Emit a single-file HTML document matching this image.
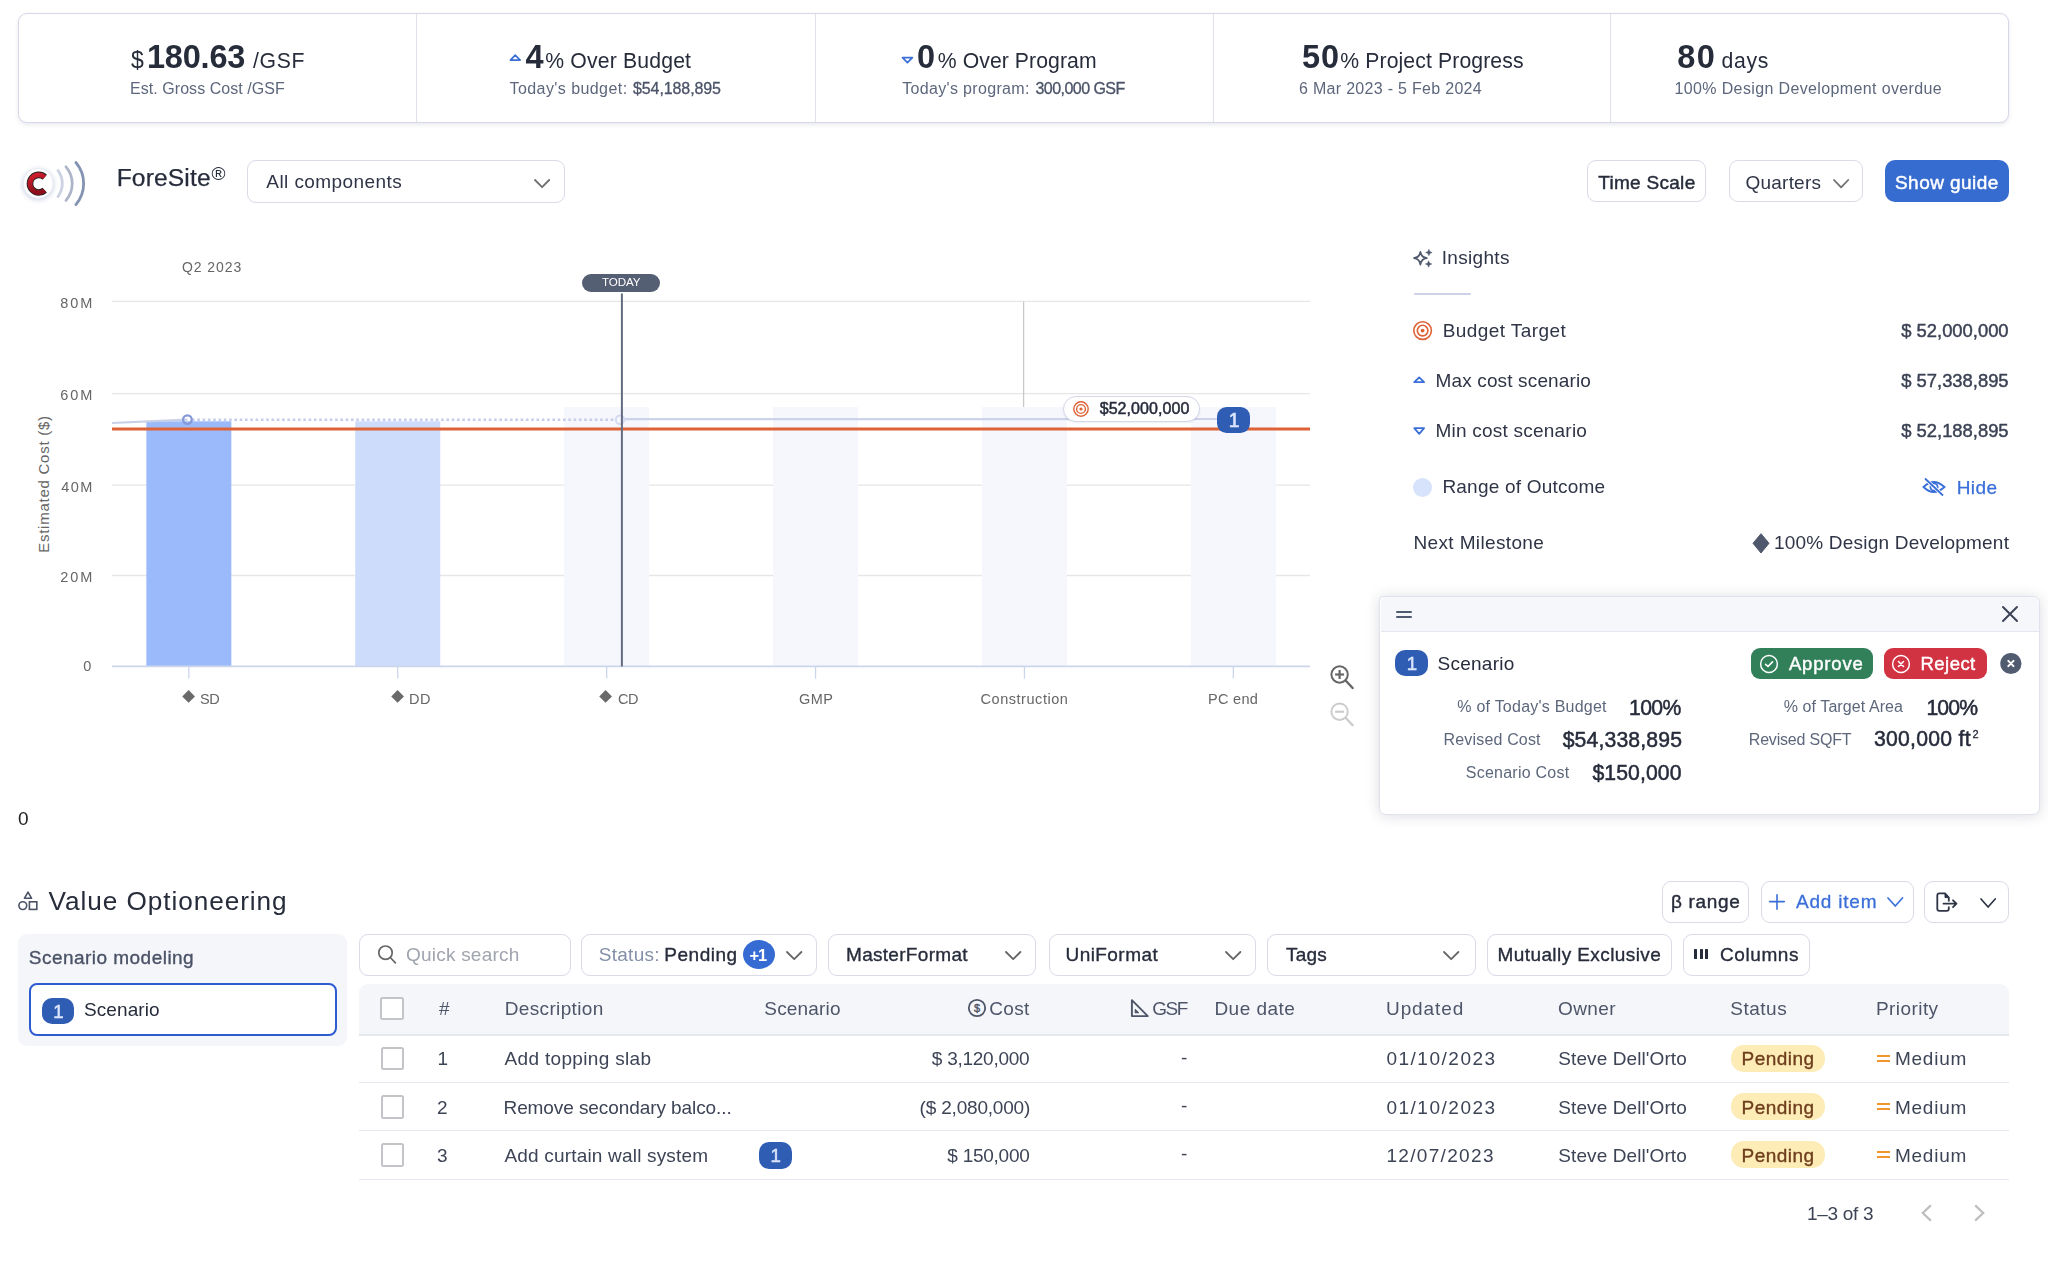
<!DOCTYPE html><html><head><meta charset="utf-8"><style>html,body{margin:0;padding:0;background:#fff;width:2048px;height:1270px;overflow:hidden;}body{position:relative;font-family:"Liberation Sans",sans-serif;}</style></head><body><div style="position:absolute;left:18px;top:13px;width:1991px;height:110px;box-sizing:border-box;border:1.5px solid #d6d8e8;border-radius:9px;background:#fff;box-shadow:0 2px 4px rgba(40,50,90,0.10);"></div>
<div style="position:absolute;left:415.7px;top:14px;width:1.3000000000000114px;height:108px;background:#dfe1ec;"></div>
<div style="position:absolute;left:814.7px;top:14px;width:1.2999999999999545px;height:108px;background:#dfe1ec;"></div>
<div style="position:absolute;left:1212.7px;top:14px;width:1.2999999999999545px;height:108px;background:#dfe1ec;"></div>
<div style="position:absolute;left:1610.2px;top:14px;width:1.2999999999999545px;height:108px;background:#dfe1ec;"></div>
<svg style="position:absolute;left:508px;top:52px" width="16" height="12" viewBox="0 0 16 12"><path d="M2.4 8.1 L7.25 3.2 L12.1 8.1 Z" fill="none" stroke="#3a6fd8" stroke-width="1.7" stroke-linejoin="round"/></svg>
<svg style="position:absolute;left:900px;top:54px" width="16" height="12" viewBox="0 0 16 12"><path d="M2.5 3.7 L7.45 8.7 L12.4 3.7 Z" fill="none" stroke="#3a6fd8" stroke-width="1.7" stroke-linejoin="round"/></svg>
<svg style="position:absolute;left:18px;top:156px" width="72" height="56" viewBox="0 0 72 56">
<defs><filter id="sh" x="-50%" y="-50%" width="200%" height="200%"><feGaussianBlur stdDeviation="2"/></filter>
<linearGradient id="rg" x1="0" y1="0" x2="0.3" y2="1"><stop offset="0" stop-color="#d42030"/><stop offset="1" stop-color="#8c0e1a"/></linearGradient></defs>
<circle cx="20.2" cy="28.4" r="16" fill="#cfd5e6" filter="url(#sh)" opacity="0.9"/>
<circle cx="20.2" cy="27.4" r="15" fill="#fff" stroke="#e4e9f3" stroke-width="0.8"/>
<path d="M26.7 21.2 A8.8 8.8 0 1 0 26.7 34.2" fill="none" stroke="#222" stroke-width="6.6"/>
<path d="M26.7 21.2 A8.8 8.8 0 1 0 26.7 34.2" fill="none" stroke="url(#rg)" stroke-width="4.8"/>
<path d="M40 14.6 A21.8 21.8 0 0 1 40 40.6" fill="none" stroke="#cdd2e2" stroke-width="2.8" stroke-linecap="round"/>
<path d="M48 10.8 A25.8 25.8 0 0 1 48 44.4" fill="none" stroke="#aeb5c8" stroke-width="2.8" stroke-linecap="round"/>
<path d="M57.9 6.5 A32.5 32.5 0 0 1 57.9 48.6" fill="none" stroke="#8593b3" stroke-width="2.8" stroke-linecap="round"/>
</svg>
<div style="position:absolute;left:247px;top:160px;width:318px;height:43px;box-sizing:border-box;border:1.3px solid #d9dbe7;border-radius:9px;background:#fff;"></div>
<svg style="position:absolute;left:532.8px;top:177.6px" width="18.2" height="11.2" viewBox="0 0 18.2 11.2"><path d="M2 2 L9.1 9.2 L16.2 2" fill="none" stroke="#6f6f6f" stroke-width="1.8" stroke-linecap="round" stroke-linejoin="round"/></svg>
<div style="position:absolute;left:1586.7px;top:160.3px;width:119.09999999999991px;height:42.099999999999994px;box-sizing:border-box;border:1.3px solid #d9dbe7;border-radius:9px;background:#fff;"></div>
<div style="position:absolute;left:1728.5px;top:160.3px;width:134.5px;height:42.099999999999994px;box-sizing:border-box;border:1.3px solid #d9dbe7;border-radius:9px;background:#fff;"></div>
<svg style="position:absolute;left:1831.5px;top:177.8px" width="18.2" height="11.4" viewBox="0 0 18.2 11.4"><path d="M2 2 L9.1 9.4 L16.2 2" fill="none" stroke="#6f6f6f" stroke-width="1.8" stroke-linecap="round" stroke-linejoin="round"/></svg>
<div style="position:absolute;left:1885.2px;top:160.3px;width:123.39999999999986px;height:42.099999999999994px;border-radius:10px;background:#366bd0;"></div>
<svg style="position:absolute;left:0;top:0" width="2048" height="1270" viewBox="0 0 2048 1270"><line x1="112" y1="301.3" x2="1310" y2="301.3" stroke="#e6e6e6" stroke-width="1.3"/><line x1="112" y1="393.6" x2="1310" y2="393.6" stroke="#e6e6e6" stroke-width="1.3"/><line x1="112" y1="485.1" x2="1310" y2="485.1" stroke="#e6e6e6" stroke-width="1.3"/><line x1="112" y1="575.5" x2="1310" y2="575.5" stroke="#e6e6e6" stroke-width="1.3"/><rect x="146.35" y="421.3" width="85.0" height="245.09999999999997" fill="#9bbafc"/><rect x="355.25" y="421.3" width="85.0" height="245.09999999999997" fill="#cddcfb"/><rect x="564.15" y="407" width="85.0" height="259.4" fill="#f5f7fc"/><rect x="773.0500000000001" y="407" width="85.0" height="259.4" fill="#f5f7fc"/><rect x="981.95" y="407" width="85.0" height="259.4" fill="#f5f7fc"/><rect x="1190.85" y="407" width="85.0" height="259.4" fill="#f5f7fc"/><line x1="112" y1="666.4" x2="1310" y2="666.4" stroke="#ccd6eb" stroke-width="1.6"/><line x1="188.85" y1="666" x2="188.85" y2="678.6" stroke="#ccd6eb" stroke-width="1.3"/><line x1="397.75" y1="666" x2="397.75" y2="678.6" stroke="#ccd6eb" stroke-width="1.3"/><line x1="606.65" y1="666" x2="606.65" y2="678.6" stroke="#ccd6eb" stroke-width="1.3"/><line x1="815.5500000000001" y1="666" x2="815.5500000000001" y2="678.6" stroke="#ccd6eb" stroke-width="1.3"/><line x1="1024.45" y1="666" x2="1024.45" y2="678.6" stroke="#ccd6eb" stroke-width="1.3"/><line x1="1233.35" y1="666" x2="1233.35" y2="678.6" stroke="#ccd6eb" stroke-width="1.3"/><line x1="1023.6" y1="301.5" x2="1023.6" y2="407" stroke="#c8c8c8" stroke-width="1.3"/><path d="M112 423 L187.4 419.6" stroke="#c8d0e8" stroke-width="2.2" fill="none"/><line x1="192" y1="419.7" x2="616" y2="419.7" stroke="#c5cdea" stroke-width="2.5" stroke-dasharray="2.6 2.7"/><line x1="624" y1="419.2" x2="1225" y2="419" stroke="#ccd3ea" stroke-width="2.2"/><circle cx="187.4" cy="419.6" r="4.3" fill="none" stroke="#8499d8" stroke-width="2.3"/><circle cx="620" cy="419.7" r="4.2" fill="none" stroke="#d4daf0" stroke-width="2"/><line x1="112" y1="429.1" x2="1310" y2="429.1" stroke="#dd6236" stroke-width="3"/><line x1="621.9" y1="293.5" x2="621.9" y2="666.4" stroke="#636c80" stroke-width="2"/></svg>
<div style="position:absolute;left:582.2px;top:273.9px;width:78.29999999999995px;height:18.400000000000034px;border-radius:9.5px;background:#555f73;"></div>
<div style="position:absolute;left:184.20000000000002px;top:692.4px;width:9.2px;height:9.2px;background:#6a6a6a;transform:rotate(45deg)"></div>
<div style="position:absolute;left:393.0px;top:692.4px;width:9.2px;height:9.2px;background:#6a6a6a;transform:rotate(45deg)"></div>
<div style="position:absolute;left:601.4px;top:692.4px;width:9.2px;height:9.2px;background:#6a6a6a;transform:rotate(45deg)"></div>
<div style="position:absolute;left:44px;top:484px;width:0;height:0"><div style="position:absolute;left:-70px;top:-9px;width:140px;text-align:center;transform:rotate(-90deg);font-family:'Liberation Sans',sans-serif;font-size:15px;letter-spacing:0.75px;line-height:18px;color:#666;white-space:nowrap">Estimated Cost ($)</div></div>
<div style="position:absolute;left:1062.8px;top:396.4px;width:137.20000000000005px;height:25.80000000000001px;box-sizing:border-box;border:1.3px solid #d3d7e8;border-radius:13px;background:#fff;box-shadow:0 1px 2px rgba(40,50,90,0.08);"></div>
<svg style="position:absolute;left:1071.8px;top:400.2px" width="18" height="18" viewBox="0 0 18 18"><circle cx="9" cy="9" r="7.2" fill="none" stroke="#dd6236" stroke-width="1.4"/><circle cx="9" cy="9" r="4.4" fill="none" stroke="#dd6236" stroke-width="1.4"/><circle cx="9" cy="9" r="1.6" fill="#dd6236"/></svg>
<div style="position:absolute;left:1217.4px;top:406.9px;width:32.59999999999991px;height:26.5px;border-radius:9.5px;background:#2f5db4;"></div>
<svg style="position:absolute;left:0;top:0" width="1400" height="740"><circle cx="1339.6" cy="674.5" r="8.2" fill="none" stroke="#666666" stroke-width="2"/><line x1="1345.6" y1="680.5" x2="1352.6" y2="688.0" stroke="#666666" stroke-width="2.4" stroke-linecap="round"/><line x1="1335.1" y1="674.5" x2="1344.1" y2="674.5" stroke="#666666" stroke-width="2.2"/><line x1="1339.6" y1="670.0" x2="1339.6" y2="679.0" stroke="#666666" stroke-width="2.2"/></svg>
<svg style="position:absolute;left:0;top:0" width="1400" height="740"><circle cx="1339.6" cy="711.7" r="8.2" fill="none" stroke="#cccccc" stroke-width="2"/><line x1="1345.6" y1="717.7" x2="1352.6" y2="725.2" stroke="#cccccc" stroke-width="2.4" stroke-linecap="round"/><line x1="1335.1" y1="711.7" x2="1344.1" y2="711.7" stroke="#cccccc" stroke-width="2.2"/></svg>
<svg style="position:absolute;left:1412px;top:247px" width="22" height="22" viewBox="0 0 22 22">
<path d="M8.4 4.8 Q9.2 10.4 14.8 11.2 Q9.2 12 8.4 17.6 Q7.6 12 2 11.2 Q7.6 10.4 8.4 4.8 Z" fill="none" stroke="#4f586c" stroke-width="1.7" stroke-linejoin="round"/>
<path d="M16.9 2.3 L17.8 4.6 L20.1 5.5 L17.8 6.4 L16.9 8.7 L16 6.4 L13.7 5.5 L16 4.6 Z" fill="#4f586c" stroke="#4f586c" stroke-width="0.5" stroke-linejoin="round"/>
<path d="M16.6 13.8 L17.5 16.1 L19.8 17 L17.5 17.9 L16.6 20.2 L15.7 17.9 L13.4 17 L15.7 16.1 Z" fill="#4f586c" stroke="#4f586c" stroke-width="0.5" stroke-linejoin="round"/>
</svg>
<div style="position:absolute;left:1413.8px;top:292.6px;width:56.799999999999955px;height:2.1999999999999886px;background:#ccd3e8;border-radius:1px;"></div>
<svg style="position:absolute;left:1412.2px;top:320.0px" width="21.2" height="21.2" viewBox="0 0 21.2 21.2"><circle cx="10.6" cy="10.6" r="8.799999999999999" fill="none" stroke="#dd6236" stroke-width="1.6"/><circle cx="10.6" cy="10.6" r="5.28" fill="none" stroke="#dd6236" stroke-width="1.6"/><circle cx="10.6" cy="10.6" r="1.92" fill="#dd6236"/></svg>
<svg style="position:absolute;left:1412px;top:374px" width="15" height="11" viewBox="0 0 15 11"><path d="M2.3 8.2 L7.2 3.4 L12.1 8.2 Z" fill="none" stroke="#3a6fd8" stroke-width="1.8" stroke-linejoin="round"/></svg>
<svg style="position:absolute;left:1412px;top:424px" width="15" height="11" viewBox="0 0 15 11"><path d="M2.3 4.1 L7.2 9.9 L12.1 4.1 Z" fill="none" stroke="#3a6fd8" stroke-width="1.8" stroke-linejoin="round"/></svg>
<div style="position:absolute;left:1413px;top:477.5px;width:19px;height:19px;border-radius:50%;background:#d7e2fb"></div>
<svg style="position:absolute;left:1921px;top:476px" width="26" height="22" viewBox="0 0 26 22">
<path d="M2.5 11 Q12.5 1 23.5 11 Q12.5 21 2.5 11 Z" fill="none" stroke="#3a6fd8" stroke-width="1.8"/>
<circle cx="13" cy="11" r="3.6" fill="none" stroke="#3a6fd8" stroke-width="1.8"/>
<line x1="4" y1="2.5" x2="22" y2="19.5" stroke="#fff" stroke-width="3.4"/>
<line x1="4" y1="2.5" x2="22" y2="19.5" stroke="#3a6fd8" stroke-width="1.8"/>
</svg>
<svg style="position:absolute;left:1750px;top:531px" width="22" height="25"><path d="M11 2.7 L19 12.3 L11 22 L3 12.3 Z" fill="#4f586c" stroke="#4f586c" stroke-width="1" stroke-linejoin="round"/></svg>
<div style="position:absolute;left:1379.3px;top:596px;width:661.2px;height:219px;box-sizing:border-box;border:1.3px solid #e0e2ee;border-radius:4px 7px 7px 7px;background:#fff;box-shadow:0 1px 14px rgba(30,40,70,0.16);"></div>
<div style="position:absolute;left:1380.6px;top:597.3px;width:658.6000000000001px;height:35.200000000000045px;background:#f6f7fb;border-radius:3px 6px 0 0;border-bottom:1.6px solid #e4e6f0;box-sizing:border-box;"></div>
<div style="position:absolute;left:1395.6px;top:610.9px;width:16.100000000000136px;height:2.0px;background:#505a70;border-radius:1px;"></div>
<div style="position:absolute;left:1395.6px;top:615.7px;width:16.100000000000136px;height:2.0px;background:#505a70;border-radius:1px;"></div>
<svg style="position:absolute;left:2001px;top:605px" width="18" height="18" viewBox="0 0 18 18"><path d="M2 2 L16 16 M16 2 L2 16" stroke="#3d4456" stroke-width="2" stroke-linecap="round"/></svg>
<div style="position:absolute;left:1395.3px;top:649.8px;width:32.600000000000136px;height:26.40000000000009px;border-radius:10px;background:#2f5db4;"></div>
<div style="position:absolute;left:1751px;top:648.2px;width:121.79999999999995px;height:31.199999999999932px;border-radius:9px;background:#32805a;"></div>
<svg style="position:absolute;left:1758.8px;top:654.1px" width="20" height="20" viewBox="0 0 20 20"><circle cx="10" cy="10" r="8.4" fill="none" stroke="#fff" stroke-width="1.5"/><path d="M6.6 10.3 L9 12.5 L13.5 7.9" fill="none" stroke="#fff" stroke-width="1.6" stroke-linecap="round" stroke-linejoin="round"/></svg>
<div style="position:absolute;left:1883.7px;top:648.2px;width:103.39999999999986px;height:31.199999999999932px;border-radius:9px;background:#d23342;"></div>
<svg style="position:absolute;left:1891.1px;top:654.1px" width="20" height="20" viewBox="0 0 20 20"><circle cx="10" cy="10" r="8.4" fill="none" stroke="#fff" stroke-width="1.5"/><path d="M7.5 7.5 L12.5 12.5 M12.5 7.5 L7.5 12.5" fill="none" stroke="#fff" stroke-width="1.6" stroke-linecap="round"/></svg>
<svg style="position:absolute;left:1999px;top:652px" width="24" height="24" viewBox="0 0 24 24"><circle cx="11.9" cy="11.5" r="10.6" fill="#525c71"/><path d="M9.3 8.9 L14.5 14.1 M14.5 8.9 L9.3 14.1" stroke="#fff" stroke-width="2" stroke-linecap="round"/></svg>
<svg style="position:absolute;left:16px;top:889px" width="24" height="24" viewBox="0 0 24 24">
<path d="M12 3.2 L15.6 9.3 L8.4 9.3 Z" fill="none" stroke="#4a5266" stroke-width="1.6" stroke-linejoin="round"/>
<circle cx="6.8" cy="16.6" r="3.9" fill="none" stroke="#4a5266" stroke-width="1.6"/>
<rect x="13.4" y="12.8" width="7.4" height="7.6" fill="none" stroke="#4a5266" stroke-width="1.6"/>
</svg>
<div style="position:absolute;left:1661.5px;top:880.6px;width:87.90000000000009px;height:42.19999999999993px;box-sizing:border-box;border:1.3px solid #d9dbe7;border-radius:9px;background:#fff;"></div>
<div style="position:absolute;left:1760.6px;top:880.6px;width:153.0px;height:42.19999999999993px;box-sizing:border-box;border:1.3px solid #d9dbe7;border-radius:9px;background:#fff;"></div>
<svg style="position:absolute;left:1767px;top:892px" width="20" height="20" viewBox="0 0 20 20"><path d="M10 2.8 V17.3 M2.7 9.6 H17.3" stroke="#3a6fd8" stroke-width="1.6" stroke-linecap="round"/></svg>
<svg style="position:absolute;left:1886px;top:895.5px" width="18.5" height="12" viewBox="0 0 18.5 12"><path d="M2 2 L9.25 10 L16.5 2" fill="none" stroke="#3a6fd8" stroke-width="1.7" stroke-linecap="round" stroke-linejoin="round"/></svg>
<div style="position:absolute;left:1924.3px;top:880.6px;width:84.60000000000014px;height:42.19999999999993px;box-sizing:border-box;border:1.3px solid #d9dbe7;border-radius:9px;background:#fff;"></div>
<svg style="position:absolute;left:1935px;top:892px" width="26" height="22" viewBox="0 0 26 22">
<path d="M13.8 9.6 V5.6 L10 1.4 H4.4 Q2.3 1.4 2.3 3.5 V16.7 Q2.3 18.8 4.4 18.8 H11.7 Q13.8 18.8 13.8 16.7 V14.4" fill="none" stroke="#2f3546" stroke-width="1.8" stroke-linejoin="round"/>
<path d="M10 1.4 L13.8 5.6 H10 Z" fill="#2f3546" stroke="#2f3546" stroke-width="1" stroke-linejoin="round"/>
<path d="M8.5 11.7 H21.3 M18 8.3 L21.5 11.7 L18 15.1" fill="none" stroke="#2f3546" stroke-width="1.8" stroke-linecap="round" stroke-linejoin="round"/>
</svg>
<svg style="position:absolute;left:1978.5px;top:897px" width="18.2" height="12" viewBox="0 0 18.2 12"><path d="M2 2 L9.1 10 L16.2 2" fill="none" stroke="#2f3546" stroke-width="1.7" stroke-linecap="round" stroke-linejoin="round"/></svg>
<div style="position:absolute;left:18.4px;top:934px;width:329.1px;height:112px;border-radius:9px;background:#f5f6fa;"></div>
<div style="position:absolute;left:29.2px;top:983.4px;width:308.3px;height:52.80000000000007px;box-sizing:border-box;border:2.5px solid #2f5bd0;border-radius:8px;background:#fff;"></div>
<div style="position:absolute;left:42px;top:997.6px;width:31.700000000000003px;height:26.199999999999932px;border-radius:10px;background:#2f5db4;"></div>
<div style="position:absolute;left:359px;top:933.8px;width:211.5px;height:42.30000000000007px;box-sizing:border-box;border:1.3px solid #d9dbe7;border-radius:9px;background:#fff;"></div>
<svg style="position:absolute;left:374px;top:943px" width="24" height="24" viewBox="0 0 24 24"><circle cx="11.5" cy="9.7" r="6.7" fill="none" stroke="#666" stroke-width="1.7"/><line x1="16.3" y1="14.5" x2="21.4" y2="19.9" stroke="#666" stroke-width="1.7" stroke-linecap="round"/></svg>
<div style="position:absolute;left:581.4px;top:933.8px;width:235.39999999999998px;height:42.30000000000007px;box-sizing:border-box;border:1.3px solid #d9dbe7;border-radius:9px;background:#fff;"></div>
<div style="position:absolute;left:742.9px;top:940.1px;width:32px;height:29px;border-radius:50%;background:#356bd2"></div>
<svg style="position:absolute;left:784.8px;top:950.3px" width="18.4" height="11.2" viewBox="0 0 18.4 11.2"><path d="M2 2 L9.2 9.2 L16.4 2" fill="none" stroke="#666" stroke-width="1.8" stroke-linecap="round" stroke-linejoin="round"/></svg>
<div style="position:absolute;left:828.4px;top:933.8px;width:208.10000000000002px;height:42.30000000000007px;box-sizing:border-box;border:1.3px solid #d9dbe7;border-radius:9px;background:#fff;"></div>
<svg style="position:absolute;left:1003.8px;top:950.3px" width="18.4" height="11.2" viewBox="0 0 18.4 11.2"><path d="M2 2 L9.2 9.2 L16.4 2" fill="none" stroke="#666" stroke-width="1.8" stroke-linecap="round" stroke-linejoin="round"/></svg>
<div style="position:absolute;left:1048.5px;top:933.8px;width:207.79999999999995px;height:42.30000000000007px;box-sizing:border-box;border:1.3px solid #d9dbe7;border-radius:9px;background:#fff;"></div>
<svg style="position:absolute;left:1223.8px;top:950.3px" width="18.4" height="11.2" viewBox="0 0 18.4 11.2"><path d="M2 2 L9.2 9.2 L16.4 2" fill="none" stroke="#666" stroke-width="1.8" stroke-linecap="round" stroke-linejoin="round"/></svg>
<div style="position:absolute;left:1267.2px;top:933.8px;width:208.79999999999995px;height:42.30000000000007px;box-sizing:border-box;border:1.3px solid #d9dbe7;border-radius:9px;background:#fff;"></div>
<svg style="position:absolute;left:1442.3px;top:950.3px" width="18.4" height="11.2" viewBox="0 0 18.4 11.2"><path d="M2 2 L9.2 9.2 L16.4 2" fill="none" stroke="#666" stroke-width="1.8" stroke-linecap="round" stroke-linejoin="round"/></svg>
<div style="position:absolute;left:1487.3px;top:933.8px;width:185.20000000000005px;height:42.30000000000007px;box-sizing:border-box;border:1.3px solid #d9dbe7;border-radius:9px;background:#fff;"></div>
<div style="position:absolute;left:1683.4px;top:933.8px;width:126.89999999999986px;height:42.30000000000007px;box-sizing:border-box;border:1.3px solid #d9dbe7;border-radius:9px;background:#fff;"></div>
<div style="position:absolute;left:1694.0px;top:948.5px;width:3.099999999999909px;height:10.600000000000023px;background:#272c3b;border-radius:0.6px;"></div>
<div style="position:absolute;left:1699.5px;top:948.5px;width:3.099999999999909px;height:10.600000000000023px;background:#272c3b;border-radius:0.6px;"></div>
<div style="position:absolute;left:1705.0px;top:948.5px;width:3.099999999999909px;height:10.600000000000023px;background:#272c3b;border-radius:0.6px;"></div>
<div style="position:absolute;left:359px;top:983.5px;width:1650px;height:51.200000000000045px;background:#f5f6fa;border-radius:9px 9px 0 0;"></div>
<div style="position:absolute;left:359px;top:1034px;width:1650px;height:1.5px;background:#e6e8ef;"></div>
<div style="position:absolute;left:359px;top:1081.7px;width:1650px;height:1.2999999999999545px;background:#e6e8ef;"></div>
<div style="position:absolute;left:359px;top:1130.0px;width:1650px;height:1.2999999999999545px;background:#e6e8ef;"></div>
<div style="position:absolute;left:359px;top:1178.8000000000002px;width:1650px;height:1.2999999999999545px;background:#e6e8ef;"></div>
<div style="position:absolute;left:380.4px;top:997.2px;width:23.5px;height:23.200000000000045px;box-sizing:border-box;border:2px solid #c2c4c8;border-radius:2.5px;background:#fff;"></div>
<svg style="position:absolute;left:966px;top:997px" width="22" height="22" viewBox="0 0 22 22"><circle cx="11" cy="11" r="8.2" fill="none" stroke="#4d5568" stroke-width="1.8"/><text x="11" y="15" text-anchor="middle" font-family="Liberation Sans" font-size="11" font-weight="400" fill="#4d5568" stroke="#4d5568" stroke-width="0.4">$</text></svg>
<svg style="position:absolute;left:1128px;top:997px" width="22" height="22" viewBox="0 0 22 22"><path d="M3.9 3.2 V19.1 H19.8 Z" fill="none" stroke="#4d5568" stroke-width="1.9" stroke-linejoin="round"/><path d="M7.3 12.6 V15.7 H10.4 Z" fill="#4d5568" stroke="#4d5568" stroke-width="1.2" stroke-linejoin="round"/></svg>
<div style="position:absolute;left:380.6px;top:1047.3000000000002px;width:23.5px;height:23.200000000000045px;box-sizing:border-box;border:2px solid #c2c4c8;border-radius:2.5px;background:#fff;"></div>
<div style="position:absolute;left:1731px;top:1045.3000000000002px;width:93.5px;height:26.399999999999864px;border-radius:13px;background:#fdecb6;"></div>
<div style="position:absolute;left:1877.2px;top:1055.1000000000001px;width:13.299999999999955px;height:1.599999999999909px;background:#f0962e;"></div>
<div style="position:absolute;left:1877.2px;top:1060.0px;width:13.299999999999955px;height:1.6000000000001364px;background:#f0962e;"></div>
<div style="position:absolute;left:380.6px;top:1095.4px;width:23.5px;height:23.200000000000045px;box-sizing:border-box;border:2px solid #c2c4c8;border-radius:2.5px;background:#fff;"></div>
<div style="position:absolute;left:1731px;top:1093.4px;width:93.5px;height:26.399999999999864px;border-radius:13px;background:#fdecb6;"></div>
<div style="position:absolute;left:1877.2px;top:1103.2px;width:13.299999999999955px;height:1.599999999999909px;background:#f0962e;"></div>
<div style="position:absolute;left:1877.2px;top:1108.1px;width:13.299999999999955px;height:1.6000000000001364px;background:#f0962e;"></div>
<div style="position:absolute;left:380.6px;top:1143.4px;width:23.5px;height:23.200000000000045px;box-sizing:border-box;border:2px solid #c2c4c8;border-radius:2.5px;background:#fff;"></div>
<div style="position:absolute;left:1731px;top:1141.4px;width:93.5px;height:26.399999999999864px;border-radius:13px;background:#fdecb6;"></div>
<div style="position:absolute;left:1877.2px;top:1151.2px;width:13.299999999999955px;height:1.599999999999909px;background:#f0962e;"></div>
<div style="position:absolute;left:1877.2px;top:1156.1px;width:13.299999999999955px;height:1.6000000000001364px;background:#f0962e;"></div>
<div style="position:absolute;left:759.1px;top:1142.1px;width:32.5px;height:26.600000000000136px;border-radius:10px;background:#2f5db4;"></div>
<svg style="position:absolute;left:0;top:0" width="2048" height="1270"><path d="M1930 1206.2 L1922.8 1213 L1930 1219.8" fill="none" stroke="#bfbfbf" stroke-width="2.3" stroke-linecap="square" stroke-linejoin="miter"/><path d="M1976 1206.2 L1983.2 1213 L1976 1219.8" fill="none" stroke="#bfbfbf" stroke-width="2.3" stroke-linecap="square" stroke-linejoin="miter"/></svg>
<div style="position:absolute;left:0;top:0;width:2048px;height:1270px;will-change:transform"><span style="position:absolute;left:131.00px;top:49.00px;font-size:23px;line-height:1;font-weight:400;color:#272c3b;letter-spacing:0.000px;white-space:nowrap;">$</span>
<span style="position:absolute;left:147.00px;top:41.00px;font-size:32.5px;line-height:1;font-weight:700;color:#272c3b;letter-spacing:-0.200px;white-space:nowrap;">180.63</span>
<span style="position:absolute;left:253.00px;top:50.00px;font-size:21.2px;line-height:1;font-weight:400;color:#272c3b;letter-spacing:0.667px;white-space:nowrap;">/GSF</span>
<span style="position:absolute;left:130.00px;top:81.00px;font-size:16.0px;line-height:1;font-weight:400;color:#5d677c;letter-spacing:0.053px;white-space:nowrap;">Est. Gross Cost /GSF</span>
<span style="position:absolute;left:525.60px;top:41.00px;font-size:32.5px;line-height:1;font-weight:700;color:#272c3b;letter-spacing:0.000px;white-space:nowrap;">4</span>
<span style="position:absolute;left:545.30px;top:50.00px;font-size:21.2px;line-height:1;font-weight:400;color:#272c3b;letter-spacing:0.167px;white-space:nowrap;">% Over Budget</span>
<span style="position:absolute;left:509.50px;top:81.00px;font-size:16.0px;line-height:1;font-weight:400;color:#5d677c;letter-spacing:0.429px;white-space:nowrap;">Today's budget:</span>
<span style="position:absolute;left:633.00px;top:81.00px;font-size:16.0px;line-height:1;font-weight:400;color:#4b5368;letter-spacing:-0.100px;white-space:nowrap;-webkit-text-stroke:0.3px #4b5368;">$54,188,895</span>
<span style="position:absolute;left:917.00px;top:41.00px;font-size:32.5px;line-height:1;font-weight:700;color:#272c3b;letter-spacing:0.000px;white-space:nowrap;">0</span>
<span style="position:absolute;left:937.80px;top:50.00px;font-size:21.2px;line-height:1;font-weight:400;color:#272c3b;letter-spacing:0.077px;white-space:nowrap;">% Over Program</span>
<span style="position:absolute;left:902.20px;top:81.00px;font-size:16.0px;line-height:1;font-weight:400;color:#5d677c;letter-spacing:0.333px;white-space:nowrap;">Today's program:</span>
<span style="position:absolute;left:1035.50px;top:81.00px;font-size:16.0px;line-height:1;font-weight:400;color:#4b5368;letter-spacing:-0.550px;white-space:nowrap;-webkit-text-stroke:0.3px #4b5368;">300,000 GSF</span>
<span style="position:absolute;left:1301.90px;top:41.00px;font-size:32.5px;line-height:1;font-weight:700;color:#272c3b;letter-spacing:1.100px;white-space:nowrap;">50</span>
<span style="position:absolute;left:1340.30px;top:50.00px;font-size:21.2px;line-height:1;font-weight:400;color:#272c3b;letter-spacing:0.112px;white-space:nowrap;">% Project Progress</span>
<span style="position:absolute;left:1299.00px;top:81.00px;font-size:16.0px;line-height:1;font-weight:400;color:#5d677c;letter-spacing:0.300px;white-space:nowrap;">6 Mar 2023 - 5 Feb 2024</span>
<span style="position:absolute;left:1677.30px;top:41.00px;font-size:32.5px;line-height:1;font-weight:700;color:#272c3b;letter-spacing:1.500px;white-space:nowrap;">80</span>
<span style="position:absolute;left:1721.50px;top:50.00px;font-size:21.2px;line-height:1;font-weight:400;color:#272c3b;letter-spacing:0.667px;white-space:nowrap;">days</span>
<span style="position:absolute;left:1674.50px;top:81.00px;font-size:16.0px;line-height:1;font-weight:400;color:#5d677c;letter-spacing:0.367px;white-space:nowrap;">100% Design Development overdue</span>
<span style="position:absolute;left:116.70px;top:166.00px;font-size:24.6px;line-height:1;font-weight:400;color:#272c3b;letter-spacing:0.143px;white-space:nowrap;-webkit-text-stroke:0.25px #272c3b;">ForeSite</span>
<span style="position:absolute;left:211.50px;top:164.00px;font-size:19px;line-height:1;font-weight:400;color:#272c3b;letter-spacing:0.000px;white-space:nowrap;">®</span>
<span style="position:absolute;left:266.30px;top:172.00px;font-size:19.0px;line-height:1;font-weight:400;color:#2f3546;letter-spacing:0.431px;white-space:nowrap;">All components</span>
<span style="position:absolute;left:1598.20px;top:173.00px;font-size:19.0px;line-height:1;font-weight:400;color:#272c3b;letter-spacing:0.300px;white-space:nowrap;-webkit-text-stroke:0.45px #272c3b;">Time Scale</span>
<span style="position:absolute;left:1745.60px;top:173.00px;font-size:19.0px;line-height:1;font-weight:400;color:#2f3546;letter-spacing:0.200px;white-space:nowrap;">Quarters</span>
<span style="position:absolute;left:1895.00px;top:173.00px;font-size:19.0px;line-height:1;font-weight:400;color:#ffffff;letter-spacing:0.444px;white-space:nowrap;-webkit-text-stroke:0.45px #fff;">Show guide</span>
<span style="position:absolute;left:602.00px;top:276.00px;font-size:11.6px;line-height:1;font-weight:400;color:#ffffff;letter-spacing:-0.100px;white-space:nowrap;">TODAY</span>
<span style="position:absolute;left:200.00px;top:692.00px;font-size:14.5px;line-height:1;font-weight:400;color:#666666;letter-spacing:-0.300px;white-space:nowrap;">SD</span>
<span style="position:absolute;left:409.00px;top:692.00px;font-size:14.5px;line-height:1;font-weight:400;color:#666666;letter-spacing:0.500px;white-space:nowrap;">DD</span>
<span style="position:absolute;left:618.00px;top:692.00px;font-size:14.5px;line-height:1;font-weight:400;color:#666666;letter-spacing:-0.400px;white-space:nowrap;">CD</span>
<span style="position:absolute;left:799.00px;top:692.00px;font-size:14.5px;line-height:1;font-weight:400;color:#666666;letter-spacing:0.500px;white-space:nowrap;">GMP</span>
<span style="position:absolute;left:980.50px;top:692.00px;font-size:14.5px;line-height:1;font-weight:400;color:#666666;letter-spacing:0.545px;white-space:nowrap;">Construction</span>
<span style="position:absolute;left:1208.00px;top:692.00px;font-size:14.5px;line-height:1;font-weight:400;color:#666666;letter-spacing:0.300px;white-space:nowrap;">PC end</span>
<span style="position:absolute;left:182.00px;top:260.00px;font-size:14px;line-height:1;font-weight:400;color:#666666;letter-spacing:0.917px;white-space:nowrap;">Q2 2023</span>
<span style="position:absolute;left:60.30px;top:296.00px;font-size:14.5px;line-height:1;font-weight:400;color:#666666;letter-spacing:1.950px;white-space:nowrap;">80M</span>
<span style="position:absolute;left:60.30px;top:388.00px;font-size:14.5px;line-height:1;font-weight:400;color:#666666;letter-spacing:1.950px;white-space:nowrap;">60M</span>
<span style="position:absolute;left:61.30px;top:480.00px;font-size:14.5px;line-height:1;font-weight:400;color:#666666;letter-spacing:1.450px;white-space:nowrap;">40M</span>
<span style="position:absolute;left:60.30px;top:570.00px;font-size:14.5px;line-height:1;font-weight:400;color:#666666;letter-spacing:1.950px;white-space:nowrap;">20M</span>
<span style="position:absolute;left:83.20px;top:659.00px;font-size:14.5px;line-height:1;font-weight:400;color:#666666;letter-spacing:0.000px;white-space:nowrap;">0</span>
<span style="position:absolute;left:1099.70px;top:401.00px;font-size:16.0px;line-height:1;font-weight:400;color:#272c3b;letter-spacing:0.070px;white-space:nowrap;-webkit-text-stroke:0.5px #272c3b;">$52,000,000</span>
<span style="position:absolute;left:1228.80px;top:411.00px;font-size:19.3px;line-height:1;font-weight:400;color:#dbe5fc;letter-spacing:0.000px;white-space:nowrap;-webkit-text-stroke:0.6px #dbe5fc;">1</span>
<span style="position:absolute;left:1441.70px;top:248.00px;font-size:19.0px;line-height:1;font-weight:400;color:#2f3546;letter-spacing:0.329px;white-space:nowrap;">Insights</span>
<span style="position:absolute;left:1442.70px;top:321.00px;font-size:19.0px;line-height:1;font-weight:400;color:#2f3546;letter-spacing:0.425px;white-space:nowrap;">Budget Target</span>
<span style="position:absolute;left:1901.30px;top:322.00px;font-size:18.4px;line-height:1;font-weight:400;color:#3b4254;letter-spacing:-0.009px;white-space:nowrap;-webkit-text-stroke:0.45px #3b4254;">$ 52,000,000</span>
<span style="position:absolute;left:1435.50px;top:371.00px;font-size:19.0px;line-height:1;font-weight:400;color:#2f3546;letter-spacing:0.144px;white-space:nowrap;">Max cost scenario</span>
<span style="position:absolute;left:1901.30px;top:372.00px;font-size:18.4px;line-height:1;font-weight:400;color:#3b4254;letter-spacing:-0.009px;white-space:nowrap;-webkit-text-stroke:0.45px #3b4254;">$ 57,338,895</span>
<span style="position:absolute;left:1435.50px;top:421.00px;font-size:19.0px;line-height:1;font-weight:400;color:#2f3546;letter-spacing:0.225px;white-space:nowrap;">Min cost scenario</span>
<span style="position:absolute;left:1901.30px;top:422.00px;font-size:18.4px;line-height:1;font-weight:400;color:#3b4254;letter-spacing:-0.009px;white-space:nowrap;-webkit-text-stroke:0.45px #3b4254;">$ 52,188,895</span>
<span style="position:absolute;left:1442.40px;top:477.00px;font-size:19.0px;line-height:1;font-weight:400;color:#2f3546;letter-spacing:0.213px;white-space:nowrap;">Range of Outcome</span>
<span style="position:absolute;left:1956.70px;top:478.00px;font-size:19px;line-height:1;font-weight:400;color:#3a6fd8;letter-spacing:0.433px;white-space:nowrap;-webkit-text-stroke:0.25px #3a6fd8;">Hide</span>
<span style="position:absolute;left:1413.50px;top:533.00px;font-size:19.0px;line-height:1;font-weight:400;color:#2f3546;letter-spacing:0.362px;white-space:nowrap;">Next Milestone</span>
<span style="position:absolute;left:1773.90px;top:533.00px;font-size:19.0px;line-height:1;font-weight:400;color:#2f3546;letter-spacing:0.218px;white-space:nowrap;">100% Design Development</span>
<span style="position:absolute;left:1406.70px;top:655.00px;font-size:18.6px;line-height:1;font-weight:400;color:#dbe5fc;letter-spacing:0.000px;white-space:nowrap;-webkit-text-stroke:0.5px #dbe5fc;">1</span>
<span style="position:absolute;left:1437.50px;top:654.00px;font-size:19.0px;line-height:1;font-weight:400;color:#272c3b;letter-spacing:0.257px;white-space:nowrap;">Scenario</span>
<span style="position:absolute;left:1788.90px;top:655.00px;font-size:18.5px;line-height:1;font-weight:400;color:#fff;letter-spacing:0.833px;white-space:nowrap;-webkit-text-stroke:0.45px #fff;">Approve</span>
<span style="position:absolute;left:1920.50px;top:655.00px;font-size:18.5px;line-height:1;font-weight:400;color:#fff;letter-spacing:0.460px;white-space:nowrap;-webkit-text-stroke:0.45px #fff;">Reject</span>
<span style="position:absolute;left:1457.30px;top:699.00px;font-size:16.0px;line-height:1;font-weight:400;color:#5d677c;letter-spacing:0.233px;white-space:nowrap;">% of Today's Budget</span>
<span style="position:absolute;left:1629.00px;top:697.00px;font-size:21.2px;line-height:1;font-weight:400;color:#272c3b;letter-spacing:-0.633px;white-space:nowrap;-webkit-text-stroke:0.5px #272c3b;">100%</span>
<span style="position:absolute;left:1443.60px;top:732.00px;font-size:16.0px;line-height:1;font-weight:400;color:#5d677c;letter-spacing:0.164px;white-space:nowrap;">Revised Cost</span>
<span style="position:absolute;left:1562.70px;top:729.00px;font-size:21.2px;line-height:1;font-weight:400;color:#272c3b;letter-spacing:0.140px;white-space:nowrap;-webkit-text-stroke:0.5px #272c3b;">$54,338,895</span>
<span style="position:absolute;left:1465.80px;top:765.00px;font-size:16.0px;line-height:1;font-weight:400;color:#5d677c;letter-spacing:0.233px;white-space:nowrap;">Scenario Cost</span>
<span style="position:absolute;left:1592.50px;top:762.00px;font-size:21.2px;line-height:1;font-weight:400;color:#272c3b;letter-spacing:0.086px;white-space:nowrap;-webkit-text-stroke:0.5px #272c3b;">$150,000</span>
<span style="position:absolute;left:1783.70px;top:699.00px;font-size:16.0px;line-height:1;font-weight:400;color:#5d677c;letter-spacing:0.087px;white-space:nowrap;">% of Target Area</span>
<span style="position:absolute;left:1926.40px;top:697.00px;font-size:21.2px;line-height:1;font-weight:400;color:#272c3b;letter-spacing:-0.800px;white-space:nowrap;-webkit-text-stroke:0.5px #272c3b;">100%</span>
<span style="position:absolute;left:1748.80px;top:732.00px;font-size:16.0px;line-height:1;font-weight:400;color:#5d677c;letter-spacing:-0.191px;white-space:nowrap;">Revised SQFT</span>
<span style="position:absolute;left:1873.90px;top:728.00px;font-size:21.2px;line-height:1;font-weight:400;color:#272c3b;letter-spacing:0.267px;white-space:nowrap;-webkit-text-stroke:0.5px #272c3b;">300,000 ft</span>
<span style="position:absolute;left:1972.50px;top:729.00px;font-size:11px;line-height:1;font-weight:400;color:#272c3b;letter-spacing:0.000px;white-space:nowrap;-webkit-text-stroke:0.3px #272c3b;">2</span>
<span style="position:absolute;left:18.00px;top:809.00px;font-size:19px;line-height:1;font-weight:400;color:#222;letter-spacing:0.000px;white-space:nowrap;">0</span>
<span style="position:absolute;left:48.50px;top:888.00px;font-size:26.2px;line-height:1;font-weight:400;color:#272c3b;letter-spacing:0.935px;white-space:nowrap;">Value Optioneering</span>
<span style="position:absolute;left:1671.00px;top:892.00px;font-size:19.0px;line-height:1;font-weight:400;color:#272c3b;letter-spacing:0.667px;white-space:nowrap;-webkit-text-stroke:0.4px #272c3b;">β range</span>
<span style="position:absolute;left:1796.00px;top:892.00px;font-size:19.0px;line-height:1;font-weight:400;color:#3a6fd8;letter-spacing:0.786px;white-space:nowrap;-webkit-text-stroke:0.3px #3a6fd8;">Add item</span>
<span style="position:absolute;left:28.80px;top:948.00px;font-size:19.0px;line-height:1;font-weight:400;color:#4a5266;letter-spacing:0.469px;white-space:nowrap;-webkit-text-stroke:0.35px #4a5266;">Scenario modeling</span>
<span style="position:absolute;left:53.20px;top:1003.00px;font-size:18.6px;line-height:1;font-weight:400;color:#dbe5fc;letter-spacing:0.000px;white-space:nowrap;-webkit-text-stroke:0.5px #dbe5fc;">1</span>
<span style="position:absolute;left:84.00px;top:1000.00px;font-size:19.0px;line-height:1;font-weight:400;color:#272c3b;letter-spacing:0.086px;white-space:nowrap;">Scenario</span>
<span style="position:absolute;left:406.00px;top:945.00px;font-size:19.0px;line-height:1;font-weight:400;color:#a0a4ae;letter-spacing:0.218px;white-space:nowrap;">Quick search</span>
<span style="position:absolute;left:598.80px;top:945.00px;font-size:19.0px;line-height:1;font-weight:400;color:#8390a8;letter-spacing:0.267px;white-space:nowrap;">Status:</span>
<span style="position:absolute;left:664.30px;top:945.00px;font-size:19.0px;line-height:1;font-weight:400;color:#272c3b;letter-spacing:0.517px;white-space:nowrap;-webkit-text-stroke:0.35px #272c3b;">Pending</span>
<span style="position:absolute;left:749.60px;top:947.00px;font-size:16.5px;line-height:1;font-weight:700;color:#fff;letter-spacing:-1.200px;white-space:nowrap;">+1</span>
<span style="position:absolute;left:846.00px;top:945.00px;font-size:19.0px;line-height:1;font-weight:400;color:#272c3b;letter-spacing:0.300px;white-space:nowrap;-webkit-text-stroke:0.35px #272c3b;">MasterFormat</span>
<span style="position:absolute;left:1065.50px;top:945.00px;font-size:19.0px;line-height:1;font-weight:400;color:#272c3b;letter-spacing:0.438px;white-space:nowrap;-webkit-text-stroke:0.35px #272c3b;">UniFormat</span>
<span style="position:absolute;left:1286.00px;top:945.00px;font-size:19.0px;line-height:1;font-weight:400;color:#272c3b;letter-spacing:0.167px;white-space:nowrap;-webkit-text-stroke:0.35px #272c3b;">Tags</span>
<span style="position:absolute;left:1497.50px;top:945.00px;font-size:19.0px;line-height:1;font-weight:400;color:#272c3b;letter-spacing:0.412px;white-space:nowrap;-webkit-text-stroke:0.35px #272c3b;">Mutually Exclusive</span>
<span style="position:absolute;left:1720.00px;top:945.00px;font-size:19.0px;line-height:1;font-weight:400;color:#272c3b;letter-spacing:0.583px;white-space:nowrap;-webkit-text-stroke:0.35px #272c3b;">Columns</span>
<span style="position:absolute;left:439.00px;top:999.00px;font-size:19.0px;line-height:1;font-weight:400;color:#4d5568;letter-spacing:0.000px;white-space:nowrap;">#</span>
<span style="position:absolute;left:504.70px;top:999.00px;font-size:19.0px;line-height:1;font-weight:400;color:#4d5568;letter-spacing:0.360px;white-space:nowrap;">Description</span>
<span style="position:absolute;left:764.30px;top:999.00px;font-size:19.0px;line-height:1;font-weight:400;color:#4d5568;letter-spacing:0.171px;white-space:nowrap;">Scenario</span>
<span style="position:absolute;left:989.30px;top:999.00px;font-size:19.0px;line-height:1;font-weight:400;color:#4d5568;letter-spacing:0.333px;white-space:nowrap;">Cost</span>
<span style="position:absolute;left:1152.30px;top:999.00px;font-size:19.0px;line-height:1;font-weight:400;color:#4d5568;letter-spacing:-1.550px;white-space:nowrap;">GSF</span>
<span style="position:absolute;left:1214.40px;top:999.00px;font-size:19.0px;line-height:1;font-weight:400;color:#4d5568;letter-spacing:0.486px;white-space:nowrap;">Due date</span>
<span style="position:absolute;left:1386.00px;top:999.00px;font-size:19.0px;line-height:1;font-weight:400;color:#4d5568;letter-spacing:0.917px;white-space:nowrap;">Updated</span>
<span style="position:absolute;left:1558.00px;top:999.00px;font-size:19.0px;line-height:1;font-weight:400;color:#4d5568;letter-spacing:0.375px;white-space:nowrap;">Owner</span>
<span style="position:absolute;left:1730.30px;top:999.00px;font-size:19.0px;line-height:1;font-weight:400;color:#4d5568;letter-spacing:0.500px;white-space:nowrap;">Status</span>
<span style="position:absolute;left:1876.00px;top:999.00px;font-size:19.0px;line-height:1;font-weight:400;color:#4d5568;letter-spacing:0.429px;white-space:nowrap;">Priority</span>
<span style="position:absolute;left:437.50px;top:1049.00px;font-size:19.0px;line-height:1;font-weight:400;color:#3d4456;letter-spacing:0.000px;white-space:nowrap;">1</span>
<span style="position:absolute;left:504.50px;top:1049.00px;font-size:19.0px;line-height:1;font-weight:400;color:#3d4456;letter-spacing:0.333px;white-space:nowrap;">Add topping slab</span>
<span style="position:absolute;left:931.80px;top:1049.00px;font-size:19.0px;line-height:1;font-weight:400;color:#3d4456;letter-spacing:-0.250px;white-space:nowrap;">$ 3,120,000</span>
<span style="position:absolute;left:1181.00px;top:1048.00px;font-size:19.0px;line-height:1;font-weight:400;color:#3d4456;letter-spacing:0.000px;white-space:nowrap;">-</span>
<span style="position:absolute;left:1386.40px;top:1049.00px;font-size:19.0px;line-height:1;font-weight:400;color:#3d4456;letter-spacing:1.522px;white-space:nowrap;">01/10/2023</span>
<span style="position:absolute;left:1558.30px;top:1049.00px;font-size:19.0px;line-height:1;font-weight:400;color:#3d4456;letter-spacing:0.093px;white-space:nowrap;">Steve Dell'Orto</span>
<span style="position:absolute;left:1741.60px;top:1049.00px;font-size:19.0px;line-height:1;font-weight:400;color:#6e3d1c;letter-spacing:0.450px;white-space:nowrap;-webkit-text-stroke:0.35px #6e3d1c;">Pending</span>
<span style="position:absolute;left:1895.00px;top:1049.00px;font-size:19.0px;line-height:1;font-weight:400;color:#3d4456;letter-spacing:0.740px;white-space:nowrap;">Medium</span>
<span style="position:absolute;left:437.00px;top:1098.00px;font-size:19.0px;line-height:1;font-weight:400;color:#3d4456;letter-spacing:0.000px;white-space:nowrap;">2</span>
<span style="position:absolute;left:503.50px;top:1098.00px;font-size:19.0px;line-height:1;font-weight:400;color:#3d4456;letter-spacing:-0.083px;white-space:nowrap;">Remove secondary balco...</span>
<span style="position:absolute;left:919.60px;top:1098.00px;font-size:19.0px;line-height:1;font-weight:400;color:#3d4456;letter-spacing:-0.192px;white-space:nowrap;">($ 2,080,000)</span>
<span style="position:absolute;left:1181.00px;top:1096.00px;font-size:19.0px;line-height:1;font-weight:400;color:#3d4456;letter-spacing:0.000px;white-space:nowrap;">-</span>
<span style="position:absolute;left:1386.40px;top:1098.00px;font-size:19.0px;line-height:1;font-weight:400;color:#3d4456;letter-spacing:1.522px;white-space:nowrap;">01/10/2023</span>
<span style="position:absolute;left:1558.30px;top:1098.00px;font-size:19.0px;line-height:1;font-weight:400;color:#3d4456;letter-spacing:0.093px;white-space:nowrap;">Steve Dell'Orto</span>
<span style="position:absolute;left:1741.60px;top:1098.00px;font-size:19.0px;line-height:1;font-weight:400;color:#6e3d1c;letter-spacing:0.450px;white-space:nowrap;-webkit-text-stroke:0.35px #6e3d1c;">Pending</span>
<span style="position:absolute;left:1895.00px;top:1098.00px;font-size:19.0px;line-height:1;font-weight:400;color:#3d4456;letter-spacing:0.740px;white-space:nowrap;">Medium</span>
<span style="position:absolute;left:437.00px;top:1146.00px;font-size:19.0px;line-height:1;font-weight:400;color:#3d4456;letter-spacing:0.000px;white-space:nowrap;">3</span>
<span style="position:absolute;left:504.50px;top:1146.00px;font-size:19.0px;line-height:1;font-weight:400;color:#3d4456;letter-spacing:0.182px;white-space:nowrap;">Add curtain wall system</span>
<span style="position:absolute;left:947.30px;top:1146.00px;font-size:19.0px;line-height:1;font-weight:400;color:#3d4456;letter-spacing:-0.250px;white-space:nowrap;">$ 150,000</span>
<span style="position:absolute;left:1181.00px;top:1144.00px;font-size:19.0px;line-height:1;font-weight:400;color:#3d4456;letter-spacing:0.000px;white-space:nowrap;">-</span>
<span style="position:absolute;left:1386.40px;top:1146.00px;font-size:19.0px;line-height:1;font-weight:400;color:#3d4456;letter-spacing:1.333px;white-space:nowrap;">12/07/2023</span>
<span style="position:absolute;left:1558.30px;top:1146.00px;font-size:19.0px;line-height:1;font-weight:400;color:#3d4456;letter-spacing:0.093px;white-space:nowrap;">Steve Dell'Orto</span>
<span style="position:absolute;left:1741.60px;top:1146.00px;font-size:19.0px;line-height:1;font-weight:400;color:#6e3d1c;letter-spacing:0.450px;white-space:nowrap;-webkit-text-stroke:0.35px #6e3d1c;">Pending</span>
<span style="position:absolute;left:1895.00px;top:1146.00px;font-size:19.0px;line-height:1;font-weight:400;color:#3d4456;letter-spacing:0.740px;white-space:nowrap;">Medium</span>
<span style="position:absolute;left:770.50px;top:1147.00px;font-size:18.6px;line-height:1;font-weight:400;color:#dbe5fc;letter-spacing:0.000px;white-space:nowrap;-webkit-text-stroke:0.5px #dbe5fc;">1</span>
<span style="position:absolute;left:1807.00px;top:1204.00px;font-size:19.0px;line-height:1;font-weight:400;color:#3d4456;letter-spacing:-0.286px;white-space:nowrap;">1–3 of 3</span></div></body></html>
